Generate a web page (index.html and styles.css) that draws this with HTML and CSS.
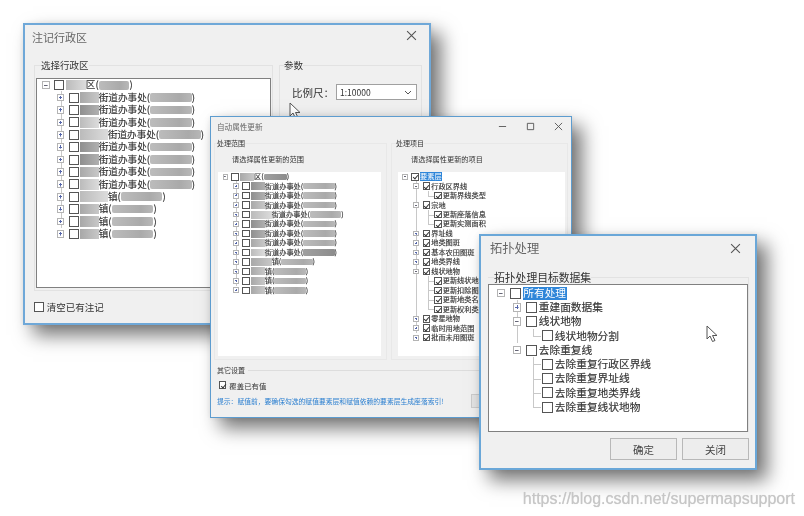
FILE: index.html
```html
<!DOCTYPE html>
<html lang="zh-CN">
<head>
    <meta charset="UTF-8">
    <title>SuperMap dialogs</title>
    <link rel="stylesheet" href="styles.css">
</head>
<body>
<div class="desk">

    <!-- annotate dialog -->
    <div class="win win-a">
        <div class="titlebar">
            <span class="title">注记行政区</span>
            <svg class="close" viewBox="0 0 10 10"><path d="M1 1L9 9M9 1L1 9"/></svg>
        </div>
        <div class="groups">
            <fieldset class="group group-area">
                <legend>选择行政区</legend>
                <div class="list tree">
                    <div class="row"><i class="col minus"></i><i class="chk"></i><i class="mask soft root"></i><span>区(</span><i class="bar short"></i><span>)</span></div>
                    <div class="row"><i class="col"></i><i class="col plus thru"></i><i class="chk"></i><i class="mask"></i><span>街道办事处(</span><i class="bar"></i><span>)</span></div>
                    <div class="row"><i class="col"></i><i class="col plus thru"></i><i class="chk"></i><i class="mask dark"></i><span>街道办事处(</span><i class="bar"></i><span>)</span></div>
                    <div class="row"><i class="col"></i><i class="col plus thru"></i><i class="chk"></i><i class="mask soft"></i><span>街道办事处(</span><i class="bar"></i><span>)</span></div>
                    <div class="row"><i class="col"></i><i class="col plus thru"></i><i class="chk"></i><i class="mask long soft"></i><span>街道办事处(</span><i class="bar"></i><span>)</span></div>
                    <div class="row"><i class="col"></i><i class="col plus thru"></i><i class="chk"></i><i class="mask dark"></i><span>街道办事处(</span><i class="bar"></i><span>)</span></div>
                    <div class="row"><i class="col"></i><i class="col plus thru"></i><i class="chk"></i><i class="mask dark"></i><span>街道办事处(</span><i class="bar"></i><span>)</span></div>
                    <div class="row"><i class="col"></i><i class="col plus thru"></i><i class="chk"></i><i class="mask"></i><span>街道办事处(</span><i class="bar"></i><span>)</span></div>
                    <div class="row"><i class="col"></i><i class="col plus thru"></i><i class="chk"></i><i class="mask soft"></i><span>街道办事处(</span><i class="bar"></i><span>)</span></div>
                    <div class="row"><i class="col"></i><i class="col plus thru"></i><i class="chk"></i><i class="mask long soft"></i><span>镇(</span><i class="bar"></i><span>)</span></div>
                    <div class="row"><i class="col"></i><i class="col plus thru"></i><i class="chk"></i><i class="mask"></i><span>镇(</span><i class="bar"></i><span>)</span></div>
                    <div class="row"><i class="col"></i><i class="col plus thru"></i><i class="chk"></i><i class="mask"></i><span>镇(</span><i class="bar"></i><span>)</span></div>
                    <div class="row"><i class="col"></i><i class="col plus"></i><i class="chk"></i><i class="mask"></i><span>镇(</span><i class="bar"></i><span>)</span></div>
                </div>
            </fieldset>
            <fieldset class="group group-param">
                <legend>参数</legend>
                <div class="scale">
                    <span>比例尺：</span>
                    <div class="combo">
                        <span>1:10000</span>
                        <svg viewBox="0 0 8 5"><path d="M1 1L4 4L7 1"/></svg>
                    </div>
                </div>
            </fieldset>
        </div>
        <label class="clear-row"><i class="chk"></i><span>清空已有注记</span></label>
    </div>

    <svg class="cursor cursor-a" viewBox="0 0 12 18"><path d="M1 1V14L4 11L6.500 16.500L9 15.500L6.500 10.500H11Z"/></svg>

    <!-- attribute update dialog -->
    <div class="win win-b">
        <div class="titlebar">
            <span class="title">自动属性更新</span>
            <div class="controls">
                <svg viewBox="0 0 10 10"><path d="M1 5H9"/></svg>
                <svg viewBox="0 0 10 10"><path d="M1.500 1.500H8.500V8.500H1.500Z"/></svg>
                <svg viewBox="0 0 10 10"><path d="M1 1L9 9M9 1L1 9"/></svg>
            </div>
        </div>
        <div class="groups">
            <fieldset class="group group-range">
                <legend>处理范围</legend>
                <p class="caption">请选择属性更新的范围</p>
                <div class="panel tree">
                    <div class="row"><i class="col minus"></i><i class="chk"></i><i class="mask"></i><span>区(</span><i class="bar short dark"></i><span>)</span></div>
                    <div class="row"><i class="col"></i><i class="col plus thru"></i><i class="chk"></i><i class="mask dark"></i><span>街道办事处(</span><i class="bar"></i><span>)</span></div>
                    <div class="row"><i class="col"></i><i class="col plus thru"></i><i class="chk"></i><i class="mask dark"></i><span>街道办事处(</span><i class="bar"></i><span>)</span></div>
                    <div class="row"><i class="col"></i><i class="col plus thru"></i><i class="chk"></i><i class="mask"></i><span>街道办事处(</span><i class="bar"></i><span>)</span></div>
                    <div class="row"><i class="col"></i><i class="col plus thru"></i><i class="chk"></i><i class="mask long soft"></i><span>街道办事处(</span><i class="bar"></i><span>)</span></div>
                    <div class="row"><i class="col"></i><i class="col plus thru"></i><i class="chk"></i><i class="mask dark"></i><span>街道办事处(</span><i class="bar"></i><span>)</span></div>
                    <div class="row"><i class="col"></i><i class="col plus thru"></i><i class="chk"></i><i class="mask dark"></i><span>街道办事处(</span><i class="bar"></i><span>)</span></div>
                    <div class="row"><i class="col"></i><i class="col plus thru"></i><i class="chk"></i><i class="mask"></i><span>街道办事处(</span><i class="bar"></i><span>)</span></div>
                    <div class="row"><i class="col"></i><i class="col plus thru"></i><i class="chk"></i><i class="mask soft"></i><span>街道办事处(</span><i class="bar dark"></i><span>)</span></div>
                    <div class="row"><i class="col"></i><i class="col plus thru"></i><i class="chk"></i><i class="mask long"></i><span>镇(</span><i class="bar"></i><span>)</span></div>
                    <div class="row"><i class="col"></i><i class="col plus thru"></i><i class="chk"></i><i class="mask"></i><span>镇(</span><i class="bar"></i><span>)</span></div>
                    <div class="row"><i class="col"></i><i class="col plus thru"></i><i class="chk"></i><i class="mask"></i><span>镇(</span><i class="bar"></i><span>)</span></div>
                    <div class="row"><i class="col"></i><i class="col plus"></i><i class="chk"></i><i class="mask"></i><span>镇(</span><i class="bar"></i><span>)</span></div>
                </div>
            </fieldset>
            <fieldset class="group group-items">
                <legend>处理项目</legend>
                <p class="caption">请选择属性更新的项目</p>
                <div class="panel tree">
                    <div class="row"><i class="col minus"></i><i class="chk on"></i><span class="sel">要素层</span></div>
                    <div class="row"><i class="col"></i><i class="col minus thru"></i><i class="chk on"></i><span>行政区界线</span></div>
                    <div class="row"><i class="col"></i><i class="col line"></i><i class="col end"></i><i class="chk on"></i><span>更新界线类型</span></div>
                    <div class="row"><i class="col"></i><i class="col minus thru"></i><i class="chk on"></i><span>宗地</span></div>
                    <div class="row"><i class="col"></i><i class="col line"></i><i class="col tee"></i><i class="chk on"></i><span>更新座落信息</span></div>
                    <div class="row"><i class="col"></i><i class="col line"></i><i class="col end"></i><i class="chk on"></i><span>更新实测面积</span></div>
                    <div class="row"><i class="col"></i><i class="col plus thru"></i><i class="chk on"></i><span>界址线</span></div>
                    <div class="row"><i class="col"></i><i class="col plus thru"></i><i class="chk on"></i><span>地类图斑</span></div>
                    <div class="row"><i class="col"></i><i class="col plus thru"></i><i class="chk on"></i><span>基本农田图斑</span></div>
                    <div class="row"><i class="col"></i><i class="col plus thru"></i><i class="chk on"></i><span>地类界线</span></div>
                    <div class="row"><i class="col"></i><i class="col minus thru"></i><i class="chk on"></i><span>线状地物</span></div>
                    <div class="row"><i class="col"></i><i class="col line"></i><i class="col tee"></i><i class="chk on"></i><span>更新线状地物</span></div>
                    <div class="row"><i class="col"></i><i class="col line"></i><i class="col tee"></i><i class="chk on"></i><span>更新扣除图斑</span></div>
                    <div class="row"><i class="col"></i><i class="col line"></i><i class="col tee"></i><i class="chk on"></i><span>更新地类名称</span></div>
                    <div class="row"><i class="col"></i><i class="col line"></i><i class="col end"></i><i class="chk on"></i><span>更新权利类型</span></div>
                    <div class="row"><i class="col"></i><i class="col plus thru"></i><i class="chk on"></i><span>零星地物</span></div>
                    <div class="row"><i class="col"></i><i class="col plus thru"></i><i class="chk on"></i><span>临时用地范围</span></div>
                    <div class="row"><i class="col"></i><i class="col plus"></i><i class="chk on"></i><span>批而未用图斑</span></div>
                </div>
            </fieldset>
        </div>
        <div class="other-head"><span>其它设置</span><hr></div>
        <label class="cover-row"><i class="chk on"></i><span>覆盖已有值</span></label>
        <div class="hint-row">
            <span class="hint">提示：赋值前，要确保勾选的赋值要素层和赋值依赖的要素层生成座落索引!</span>
            <button class="btn-hidden" type="button"></button>
        </div>
    </div>

    <!-- topology dialog -->
    <div class="win win-c">
        <div class="titlebar">
            <span class="title">拓扑处理</span>
            <svg class="close" viewBox="0 0 10 10"><path d="M1 1L9 9M9 1L1 9"/></svg>
        </div>
        <fieldset class="group group-topo">
            <legend>拓扑处理目标数据集</legend>
            <div class="list tree">
                <div class="row"><i class="col minus"></i><i class="chk"></i><span class="sel">所有处理</span></div>
                <div class="row"><i class="col"></i><i class="col plus thru"></i><i class="chk"></i><span>重建面数据集</span></div>
                <div class="row"><i class="col"></i><i class="col minus thru"></i><i class="chk"></i><span>线状地物</span></div>
                <div class="row"><i class="col"></i><i class="col line"></i><i class="col end"></i><i class="chk"></i><span>线状地物分割</span></div>
                <div class="row"><i class="col"></i><i class="col minus"></i><i class="chk"></i><span>去除重复线</span></div>
                <div class="row"><i class="col"></i><i class="col"></i><i class="col tee"></i><i class="chk"></i><span>去除重复行政区界线</span></div>
                <div class="row"><i class="col"></i><i class="col"></i><i class="col tee"></i><i class="chk"></i><span>去除重复界址线</span></div>
                <div class="row"><i class="col"></i><i class="col"></i><i class="col tee"></i><i class="chk"></i><span>去除重复地类界线</span></div>
                <div class="row"><i class="col"></i><i class="col"></i><i class="col end"></i><i class="chk"></i><span>去除重复线状地物</span></div>
            </div>
        </fieldset>
        <div class="buttons">
            <button type="button">确定</button>
            <button type="button">关闭</button>
        </div>
    </div>

    <svg class="cursor cursor-c" viewBox="0 0 12 18"><path d="M1 1V14L4 11L6.500 16.500L9 15.500L6.500 10.500H11Z"/></svg>

    <div class="watermark">https://blog.csdn.net/supermapsupport</div>
</div>
</body>
</html>
```

FILE: styles.css
```css
/* Page */
body {
    margin: 0;
    background: #fff;
    overflow: hidden;
    font-family: "Noto Sans CJK SC", "Liberation Sans", sans-serif;
    color: #333;
}

.desk {
    position: relative;
    width: 804px;
    height: 516px;
    overflow: hidden;
    filter: blur(0.5px);
}

/* Windows sit on a free canvas */
.win {
    position: absolute;
    box-sizing: border-box;
    background: #f0f0f0;
    box-shadow: 10px 10px 18px rgba(0, 0, 0, 0.55), 0 0 6px rgba(0, 0, 0, 0.08);
}

.win-a {
    left: 23px;
    top: 23px;
    width: 408px;
    height: 302px;
    border: 2px solid #6fa8d8;
}

.win-b {
    left: 210px;
    top: 116px;
    width: 362px;
    height: 302px;
    border: 1px solid #5d9ccf;
}

.win-c {
    left: 479px;
    top: 234px;
    width: 278px;
    height: 236px;
    border: 2px solid #6aa7d8;
}

.titlebar {
    display: flex;
    justify-content: space-between;
    color: #666;
}

.close {
    width: 11px;
    height: 11px;
    fill: none;
    stroke: #555;
    stroke-width: 1;
}

.groups {
    display: flex;
}

.group {
    box-sizing: border-box;
    min-width: 0;
    margin: 0;
    padding: 0;
    border: 1px solid #e2e2e2;
}

.group legend {
    padding: 0;
    color: #333;
}

/* Tree */
.tree {
    box-sizing: border-box;
    background: #fff;
    overflow: hidden;
    line-height: 1;
    -webkit-text-stroke: 0.15px #333;
    --ind: 1.5em;
}

.list {
    border: 1px solid #808080;
}

.row {
    display: flex;
    align-items: center;
    height: var(--rh);
    white-space: nowrap;
}

.col {
    position: relative;
    flex: none;
    width: var(--ind);
    height: 100%;
}

.line::before,
.thru::before,
.tee::before,
.end::before {
    content: "";
    position: absolute;
    left: 50%;
    top: 0;
    bottom: 0;
    border-left: 1px solid #c8c8c8;
}

.end::before {
    bottom: 50%;
}

.tee::after,
.end::after {
    content: "";
    position: absolute;
    left: 50%;
    right: 0;
    top: 50%;
    border-top: 1px solid #c8c8c8;
}

.plus::after,
.minus::after {
    content: "";
    position: absolute;
    left: 50%;
    top: 50%;
    box-sizing: border-box;
    width: 0.8em;
    height: 0.8em;
    margin: -0.4em;
    border: 1px solid #b4b4b4;
}

.minus::after {
    background: linear-gradient(#667, #667) center / 60% 1px no-repeat, #fff;
}

.plus::after {
    background: linear-gradient(#56a, #56a) center / 60% 1px no-repeat,
        linear-gradient(#56a, #56a) center / 1px 60% no-repeat, #fff;
}

.chk {
    position: relative;
    flex: none;
    box-sizing: border-box;
    width: 1.05em;
    height: 1.05em;
    margin-left: 0.08em;
    border: 1px solid #555;
    background: #fff;
}

.tree .chk {
    margin-right: 0.15em;
}

.chk.on::after {
    content: "";
    position: absolute;
    left: 0.26em;
    top: 0.06em;
    width: 0.26em;
    height: 0.56em;
    border-right: 1px solid #333;
    border-bottom: 1px solid #333;
    transform: rotate(40deg);
}

.sel {
    padding: 0.1em 0.05em;
    background: #2f86d9;
    color: #fff;
    -webkit-text-stroke: 0;
}

/* Blurred-out names */
.mask {
    flex: none;
    width: 1.95em;
    height: 1.1em;
    background: linear-gradient(90deg, #a8a8a8, #c8c8c8);
}

.mask.dark {
    background: linear-gradient(90deg, #8f8f8f, #b0b0b0);
}

.mask.soft {
    background: linear-gradient(90deg, #bbb, #dcdcdc);
}

.mask.root {
    width: 2.1em;
}

.mask.long {
    width: 2.9em;
}

.bar {
    flex: none;
    width: 4.35em;
    height: 0.9em;
    border-radius: 0.2em;
    background: linear-gradient(90deg, #bcbcbc, #aaa 70%, #b8b8b8);
}

.bar.dark {
    background: linear-gradient(90deg, #a0a0a0, #8c8c8c);
}

.bar.short {
    width: 3.2em;
}

/* Annotate dialog */
.win-a .titlebar {
    height: 34px;
    padding: 4px 12px 0 7px;
    box-sizing: border-box;
    font-size: 11px;
}

.win-a .close {
    margin-top: 1px;
}

.win-a .groups {
    gap: 6px;
    padding-left: 9px;
    font-size: 9.500px;
}

.group-area {
    width: 239px;
    height: 232px;
    padding: 7px 1px 1px;
}

.group-area legend {
    margin-left: 5px;
    font-size: 9.500px;
    line-height: 12px;
}

.group-area .list {
    height: 210px;
    padding-left: 2px;
    font-size: 9.600px;
    --rh: 12.400px;
}

.group-param {
    width: 143px;
    height: 232px;
}

.group-param legend {
    margin-left: 4px;
    font-size: 9.500px;
    line-height: 12px;
}

.scale {
    display: flex;
    align-items: center;
    justify-content: space-between;
    padding: 13px 4px 0 12px;
    font-size: 10.500px;
}

.combo {
    display: flex;
    align-items: center;
    justify-content: space-between;
    box-sizing: border-box;
    width: 81px;
    height: 16px;
    padding: 0 4px 0 3px;
    border: 1px solid #a0a0a0;
    background: #fff;
    font-size: 8.500px;
}

.combo svg {
    width: 8px;
    height: 5px;
    fill: none;
    stroke: #555;
}

.clear-row {
    display: flex;
    align-items: center;
    gap: 3px;
    padding: 9px 0 0 8px;
    font-size: 9.500px;
}

/* Attribute update dialog */
.win-b .titlebar {
    align-items: center;
    height: 21px;
    padding: 0 8px 3px 6px;
    box-sizing: border-box;
    font-size: 7.600px;
}

.controls {
    display: flex;
    gap: 19px;
}

.controls svg {
    width: 9px;
    height: 9px;
    fill: none;
    stroke: #555;
    stroke-width: 1;
}

.win-b .groups {
    gap: 4px;
    padding-left: 3px;
}

.group-range,
.group-items {
    height: 222px;
    border-color: #e8e8e8;
}

.group-range {
    width: 173px;
}

.group-items {
    width: 177px;
}

.group-range legend,
.group-items legend {
    margin-left: 2px;
    font-size: 7px;
    line-height: 10px;
}

.group-items legend {
    margin-left: 4px;
}

.caption {
    margin: 0 0 2px;
    padding-left: 17px;
    font-size: 7.200px;
    line-height: 22px;
}

.group-items .caption {
    padding-left: 19px;
}

.panel {
    height: 184px;
    margin-left: 3px;
    width: 163px;
    padding-left: 2px;
    font-size: 7.200px;
    --rh: 9.470px;
}

.group-items .panel {
    width: 167px;
    margin-left: 6px;
    padding-left: 1px;
    --ind: 1.6em;
}

.other-head {
    display: flex;
    align-items: center;
    gap: 3px;
    height: 20px;
    padding: 0 3px 0 6px;
    font-size: 7px;
}

.other-head hr {
    flex: 1;
    margin: 0;
    border: 0;
    border-top: 1px solid #ddd;
}

.cover-row {
    display: flex;
    align-items: center;
    gap: 3px;
    height: 14px;
    margin-top: -2px;
    padding-left: 7px;
    font-size: 7.400px;
}

.hint-row {
    display: flex;
    align-items: center;
    justify-content: space-between;
    height: 14px;
    margin-top: 2px;
    padding-left: 6px;
}

.hint {
    color: #2b7fd0;
    font-size: 6.800px;
    white-space: nowrap;
}

.btn-hidden {
    width: 40px;
    height: 14px;
    margin-right: 60px;
    border: 1px solid #ccc;
    background: #e4e4e4;
}

/* Topology dialog */
.win-c .titlebar {
    height: 34px;
    padding: 0 14px 0 9px;
    box-sizing: border-box;
    font-size: 12.300px;
    line-height: 24px;
}

.win-c .close {
    margin-top: 7px;
}

.group-topo {
    width: 261px;
    margin-left: 7px;
    border-bottom: 0;
    border-left: 0;
}

.group-topo legend {
    margin-left: 6px;
    font-size: 10.800px;
    line-height: 14px;
}

.group-topo .list {
    height: 148px;
    padding: 1px 0 0 4px;
    font-size: 10.700px;
    --rh: 14.250px;
}

.buttons {
    display: flex;
    justify-content: flex-end;
    gap: 5px;
    padding: 6px 6px 0 0;
}

.buttons button {
    width: 67px;
    height: 22px;
    padding: 0;
    border: 1px solid #b8b8b8;
    background: #ededed;
    color: #444;
    font-family: inherit;
    font-size: 10.500px;
}

/* Mouse pointers and the watermark lie over everything */
.cursor {
    position: absolute;
    width: 12px;
    height: 18px;
    fill: #fff;
    stroke: #555;
    stroke-width: 1;
}

.cursor-a {
    left: 289px;
    top: 102px;
}

.cursor-c {
    left: 706px;
    top: 325px;
}

.watermark {
    position: absolute;
    right: 9px;
    top: 490px;
    color: #c6c6c6;
    font-family: "Liberation Sans", sans-serif;
    font-size: 16px;
    line-height: 18px;
    text-shadow: 0 0 1px rgba(0, 0, 0, 0.2);
}
```
